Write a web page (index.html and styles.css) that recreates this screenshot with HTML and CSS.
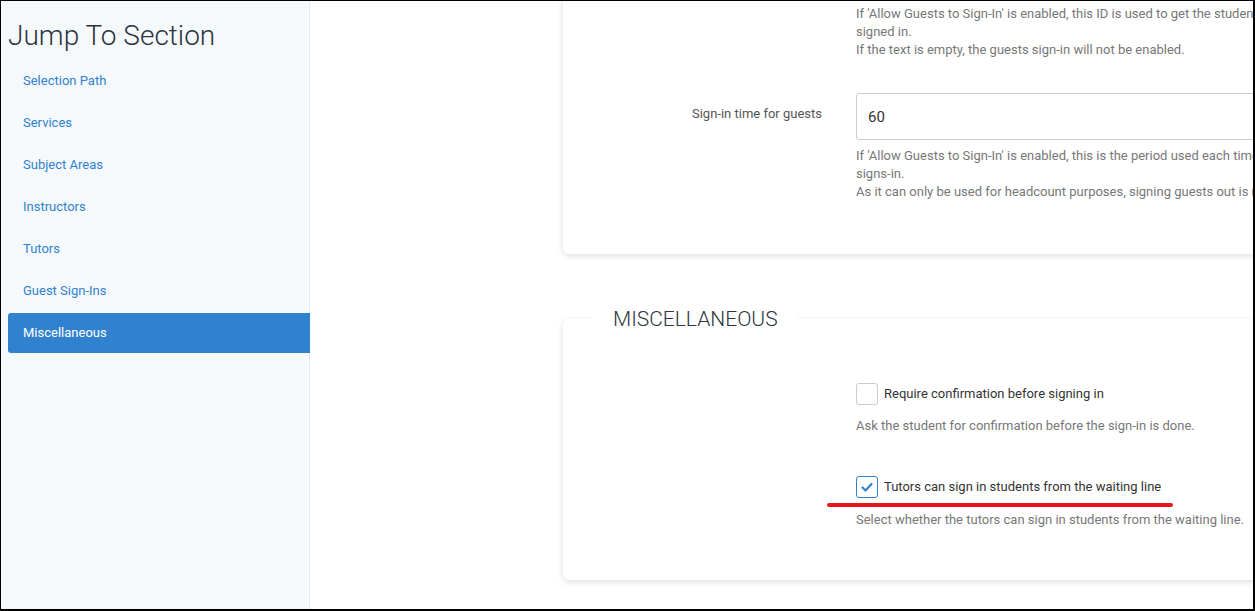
FILE: index.html
```html
<!DOCTYPE html>
<html lang="en">
<head>
  <meta charset="UTF-8">
  <meta name="viewport" content="width=device-width, initial-scale=1.0">
  <title>Settings</title>
  <link rel="stylesheet" href="styles.css">
</head>
<body>
  <aside class="sidebar">
    <h2 class="sidebar-title">Jump To Section</h2>
    <nav class="section-nav">
      <a class="nav-item" href="#">Selection Path</a>
      <a class="nav-item" href="#">Services</a>
      <a class="nav-item" href="#">Subject Areas</a>
      <a class="nav-item" href="#">Instructors</a>
      <a class="nav-item" href="#">Tutors</a>
      <a class="nav-item" href="#">Guest Sign-Ins</a>
      <a class="nav-item active" href="#">Miscellaneous</a>
    </nav>
  </aside>

  <main class="content">
    <section class="card card-guests">
      <div class="form-row">
        <div class="row-label"></div>
        <div class="row-field">
          <p class="help">If 'Allow Guests to Sign-In' is enabled, this ID is used to get the student record of the guest being<br>signed in.<br>If the text is empty, the guests sign-in will not be enabled.</p>
        </div>
      </div>
      <div class="form-row row-spaced">
        <label class="row-label" for="guestTime">Sign-in time for guests</label>
        <div class="row-field">
          <input class="text-input" type="text" id="guestTime" value="60">
          <p class="help help-under">If 'Allow Guests to Sign-In' is enabled, this is the period used each time a guest<br>signs-in.<br>As it can only be used for headcount purposes, signing guests out is not required.</p>
        </div>
      </div>
    </section>

    <section class="card card-misc">
      <h3 class="card-legend">Miscellaneous</h3>
      <div class="form-row">
        <div class="row-label"></div>
        <div class="row-field">
          <div class="check-row">
            <span class="checkbox"></span>
            <span class="check-label">Require confirmation before signing in</span>
          </div>
          <p class="help help-check">Ask the student for confirmation before the sign-in is done.</p>

          <div class="check-row check-row-spaced">
            <span class="checkbox checked">
              <svg width="20" height="20" viewBox="0 0 20 20"><path d="M5.5 10.5 L8.5 13.5 L14.5 7" fill="none" stroke="#3182ce" stroke-width="2.2" stroke-linecap="round" stroke-linejoin="round"/></svg>
            </span>
            <span class="check-label">Tutors can sign in students from the waiting line</span>
          </div>
          <div class="mark"></div>
          <p class="help help-marked">Select whether the tutors can sign in students from the waiting line.</p>
        </div>
      </div>
    </section>
  </main>
</body>
</html>
```

FILE: styles.css
```css
html, body {
  margin: 0;
  padding: 0;
}
body {
  font-family: Roboto, "Noto Sans", Arial, sans-serif;
  background-color: #fff;
  color: #333;
  height: 611px;
  box-sizing: border-box;
  border: 1px solid #000;
  border-right-width: 2px;
  border-bottom-width: 2px;
  display: flex;
  overflow: hidden;
}
.sidebar {
  flex: none;
  width: 309px;
  box-sizing: border-box;
  padding-left: 7px;
  background: #f5f9fc;
  border-right: 1px solid #e6ebf0;
  position: relative;
  z-index: 1;
}
.sidebar-title {
  margin: 18px 0 8px;
  font-size: 28px;
  line-height: 34px;
  font-weight: 300;
  color: #2d3440;
}
.section-nav {
  display: flex;
  flex-direction: column;
  gap: 2px;
}
.nav-item {
  display: block;
  height: 40px;
  line-height: 39px;
  padding-left: 15px;
  margin-right: -1px;
  font-size: 13px;
  color: #3182ce;
  text-decoration: none;
  border-radius: 3px 0 0 3px;
}
.nav-item.active {
  background: #3182ce;
  color: #fff;
}
.content {
  flex: 1;
  min-width: 0;
  overflow: hidden;
  padding-left: 253px;
  display: flex;
  flex-direction: column;
  align-items: flex-start;
}
.card {
  flex: none;
  width: 1000px;
  background: #fff;
  border-radius: 6px;
  box-shadow: 0 2px 6px rgba(0, 0, 0, 0.13);
}
.card-guests {
  margin-top: -40px;
  padding: 44px 0 53px;
}
.card-misc {
  margin-top: 65px;
  padding: 0 0 51px;
}
.card-legend {
  width: fit-content;
  margin: -13px 0 51px 30px;
  padding: 0 19px 0 20px;
  background: #fff;
  font-size: 21px;
  line-height: 26px;
  font-weight: 300;
  text-transform: uppercase;
  color: #2d3440;
}
.form-row {
  display: grid;
  grid-template-columns: 259px 1fr;
  column-gap: 34px;
}
.row-spaced {
  margin-top: 34px;
}
.row-label {
  text-align: right;
  font-size: 13px;
  line-height: 18px;
  padding-top: 12px;
  color: #555;
}
.help {
  margin: 0;
  font-size: 13px;
  line-height: 18px;
  color: #777;
  white-space: nowrap;
}
.help-under {
  margin-top: 7px;
}
.text-input {
  display: block;
  width: 100%;
  height: 47px;
  box-sizing: border-box;
  border: 1px solid #ccc;
  border-radius: 3px;
  padding: 0 11px;
  font-family: inherit;
  font-size: 15px;
  color: #333;
}
.check-row {
  display: flex;
  align-items: center;
  gap: 6px;
}
.check-row-spaced {
  margin-top: 41px;
}
.checkbox {
  width: 22px;
  height: 22px;
  box-sizing: border-box;
  border: 1px solid #ccc;
  border-radius: 3px;
  display: flex;
  align-items: center;
  justify-content: center;
}
.checkbox.checked {
  border-color: #3182ce;
}
.check-label {
  font-size: 13px;
  line-height: 18px;
  color: #333;
  margin-top: -1px;
}
.help-check {
  margin-top: 12px;
}
.mark {
  width: 346px;
  height: 4px;
  margin: 5px 0 0 -29px;
  background: #e8151d;
  border-radius: 2px;
}
.help-marked {
  margin-top: 4px;
}
```
